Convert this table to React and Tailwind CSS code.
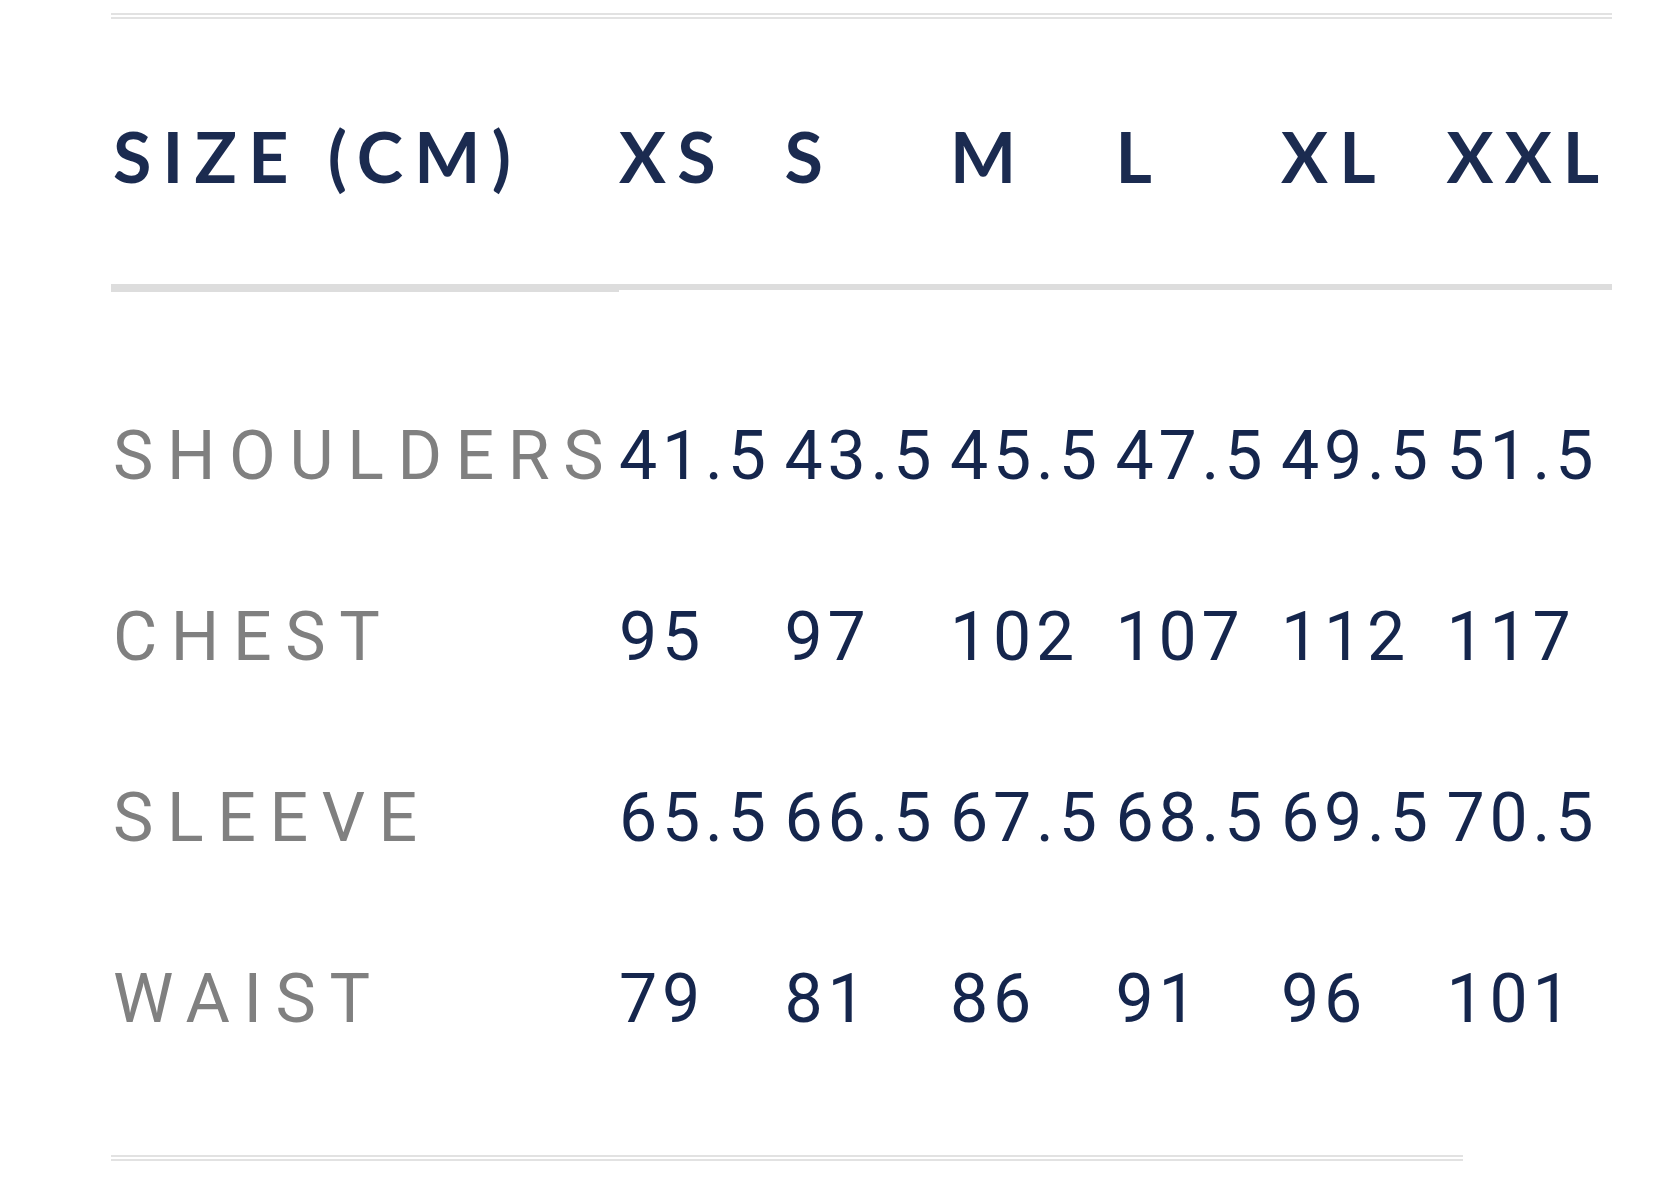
import React from "react";

const sizes = ["XS", "S", "M", "L", "XL", "XXL"];
const rows = [
  { label: "SHOULDERS", values: ["41.5", "43.5", "45.5", "47.5", "49.5", "51.5"] },
  { label: "CHEST", values: ["95", "97", "102", "107", "112", "117"] },
  { label: "SLEEVE", values: ["65.5", "66.5", "67.5", "68.5", "69.5", "70.5"] },
  { label: "WAIST", values: ["79", "81", "86", "91", "96", "101"] },
];

export default function App() {
  return (
    <div className="min-h-[1181px] w-full bg-white pl-[111px] pt-[13px]">
      <div className="w-[1501px] border-t-[6px] border-double border-[#e2e2e2]">
        <div className="grid grid-cols-[508px_repeat(6,1fr)]">
          <div className="flex h-[273px] items-center border-b-[8px] border-[#dddddd] pl-[2px] pt-[8px] font-['Lato',sans-serif] text-[70px] font-bold leading-none tracking-[0.16em] whitespace-nowrap text-[#1b2b50]">
            SIZE (CM)
          </div>
          {sizes.map((s) => (
            <div
              key={s}
              className="flex h-[271px] items-center border-b-[6px] border-[#dddddd] pt-[8px] font-['Lato',sans-serif] text-[70px] font-bold leading-none tracking-[0.16em] whitespace-nowrap text-[#1b2b50]"
            >
              {s}
            </div>
          ))}
        </div>
        <div className="pt-[73px] pb-[66px]">
          {rows.map((r) => (
            <div key={r.label} className="grid h-[181px] grid-cols-[508px_repeat(6,1fr)] items-center">
              <div className="pl-[2px] font-['Roboto',sans-serif] text-[68px] leading-none tracking-[0.2em] whitespace-nowrap text-[#808080]">
                {r.label}
              </div>
              {r.values.map((v, i) => (
                <div
                  key={i}
                  className="font-['Roboto',sans-serif] text-[68px] leading-none tracking-[0.07em] whitespace-nowrap text-[#15264d]"
                >
                  {v}
                </div>
              ))}
            </div>
          ))}
        </div>
      </div>
      <div className="w-[1352px] border-t-[6px] border-double border-[#e2e2e2]" />
    </div>
  );
}
